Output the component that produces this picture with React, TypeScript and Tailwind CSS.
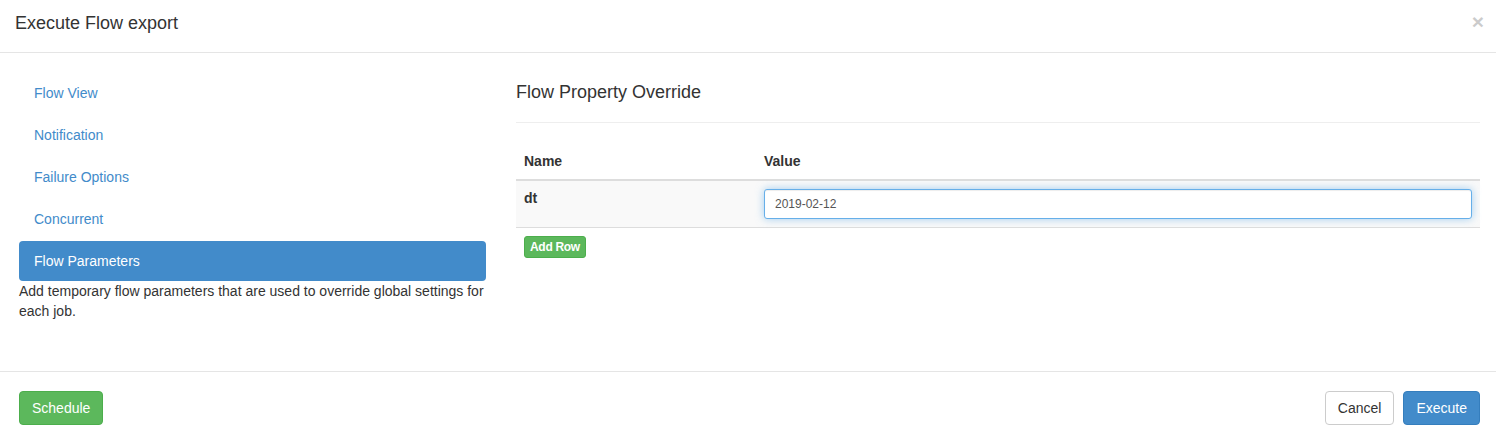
import React, { useState } from 'react';

const navItems = ['Flow View', 'Notification', 'Failure Options', 'Concurrent', 'Flow Parameters'];

export default function App() {
  const [active, setActive] = useState('Flow Parameters');
  const [value, setValue] = useState('2019-02-12');

  return (
    <div
      className="w-[1496px] h-[441px] bg-white text-[#333] text-[14px] leading-[20px] flex flex-col"
      style={{ fontFamily: '"Liberation Sans", Arial, Helvetica, sans-serif' }}
    >
      {/* Header */}
      <div className="h-[53px] border-b border-[#e5e5e5] flex items-start justify-between pl-[15px] pr-[12px] pt-[10px]">
        <h4 className="text-[18px] leading-[26px] text-[#333]">Execute Flow export</h4>
        <button className="text-[21px] leading-[21px] font-bold text-black opacity-20 pt-[1px]">×</button>
      </div>

      {/* Body */}
      <div className="flex-1 flex pl-[19px] pr-[16px] pt-[20px]">
        <div className="w-[467px] shrink-0">
          <ul className="flex flex-col gap-[2px]">
            {navItems.map((item) => (
              <li key={item}>
                <a
                  href="#"
                  onClick={(e) => {
                    e.preventDefault();
                    setActive(item);
                  }}
                  className={
                    active === item
                      ? 'block h-[40px] px-[15px] py-[10px] rounded-[4px] bg-[#428bca] text-white'
                      : 'block h-[40px] px-[15px] py-[10px] rounded-[4px] text-[#428bca]'
                  }
                >
                  {item}
                </a>
              </li>
            ))}
          </ul>
          <p className="mt-0 text-[#333]">
            Add temporary flow parameters that are used to override global settings for each job.
          </p>
        </div>

        <div className="ml-[30px] flex-1">
          <h3 className="text-[18px] leading-[26px] pt-[6px]">Flow Property Override</h3>
          <hr className="mt-[17px] mb-[20px] border-t border-[#eee]" />
          <table className="w-full border-collapse">
            <thead>
              <tr className="border-b-2 border-[#ddd]">
                <th className="w-[240px] text-left font-bold px-[8px] py-[8px]">Name</th>
                <th className="text-left font-bold px-[8px] py-[8px]">Value</th>
              </tr>
            </thead>
            <tbody>
              <tr className="bg-[#f9f9f9] border-b border-[#ddd]">
                <td className="align-top font-bold px-[8px] pt-[7px] pb-[8px]">dt</td>
                <td className="px-[8px] py-[8px]">
                  <input
                    value={value}
                    onChange={(e) => setValue(e.target.value)}
                    className="w-full h-[30px] px-[10px] text-[12px] text-[#555] bg-white border border-[#66afe9] rounded-[3px] outline-none shadow-[inset_0_1px_1px_rgba(0,0,0,0.075),0_0_8px_rgba(102,175,233,0.6)]"
                  />
                </td>
              </tr>
            </tbody>
          </table>
          <button className="mt-[8px] ml-[8px] h-[22px] px-[5px] text-[12px] leading-[18px] font-bold tracking-[-0.3px] text-white bg-[#5cb85c] border border-[#4cae4c] rounded-[3px]">
            Add Row
          </button>
        </div>
      </div>

      {/* Footer */}
      <div className="h-[70px] border-t border-[#e5e5e5] flex items-start justify-between pl-[19px] pr-[16px] pt-[19px]">
        <button className="h-[34px] px-[12px] rounded-[4px] bg-[#5cb85c] border border-[#4cae4c] text-white">
          Schedule
        </button>
        <div className="flex gap-[9px]">
          <button className="h-[34px] px-[12px] rounded-[4px] bg-white border border-[#ccc] text-[#333]">
            Cancel
          </button>
          <button className="h-[34px] px-[12px] rounded-[4px] bg-[#428bca] border border-[#357ebd] text-white">
            Execute
          </button>
        </div>
      </div>
    </div>
  );
}
